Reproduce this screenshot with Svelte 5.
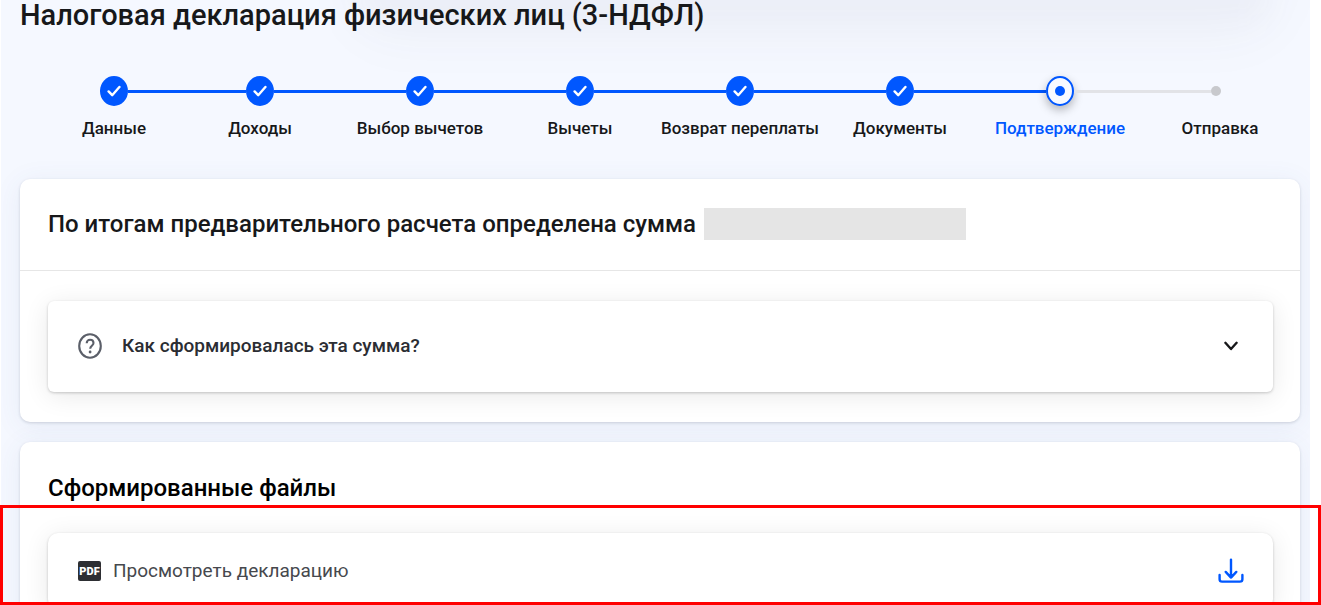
<script>
  const steps = [
    { label: 'Данные', state: 'done' },
    { label: 'Доходы', state: 'done' },
    { label: 'Выбор вычетов', state: 'done' },
    { label: 'Вычеты', state: 'done' },
    { label: 'Возврат переплаты', state: 'done' },
    { label: 'Документы', state: 'done' },
    { label: 'Подтверждение', state: 'current' },
    { label: 'Отправка', state: 'next' },
  ];
  let open = $state(false);
</script>

<main class="page">
  <div class="shade"></div>
  <h1>Налоговая декларация физических лиц (3-НДФЛ)</h1>

  <ol class="steps">
    {#each steps as step}
      <li class="step {step.state}" aria-current={step.state === 'current' ? 'step' : undefined}>
        <div class="track">
          <span class="line"></span>
          <span class="marker">
            {#if step.state === 'done'}
              <svg width="14" height="14" viewBox="0 0 14 14" aria-hidden="true">
                <path d="M1.6 7.4 5.2 11.2 12.4 3" />
              </svg>
            {/if}
          </span>
          <span class="line"></span>
        </div>
        <span class="label">{step.label}</span>
      </li>
    {/each}
  </ol>

  <section class="card">
    <header class="summary">
      <h2>По итогам предварительного расчета определена сумма</h2>
      <span class="amount"></span>
    </header>
    <div class="body">
      <button class="question" type="button" aria-expanded={open} onclick={() => (open = !open)}>
        <svg class="help" width="24" height="26" viewBox="0 0 24 26" aria-hidden="true">
          <ellipse cx="12" cy="13" rx="10.8" ry="11.7" />
          <path d="M8.7 10.2C8.7 8 10.1 6.7 12.1 6.7s3.4 1.3 3.4 3.3c0 2.7-3.3 3-3.3 5.8" />
          <circle class="dot" cx="12.1" cy="19" r="1.4" />
        </svg>
        <span class="question-text">Как сформировалась эта сумма?</span>
        <svg class="chevron" width="14" height="10" viewBox="0 0 14 10" aria-hidden="true">
          <path d="M1.4 1.8 7 8l5.6-6.2" />
        </svg>
      </button>
    </div>
  </section>

  <section class="card files">
    <h2>Сформированные файлы</h2>
    <div class="file">
      <svg width="24" height="20" viewBox="0 0 24 20" aria-hidden="true">
        <rect width="23" height="20" rx="2" fill="#2d2f33" />
        <text x="11.5" y="14" text-anchor="middle">PDF</text>
      </svg>
      <a class="file-name" href="#view">Просмотреть декларацию</a>
      <button class="download" type="button" aria-label="Скачать">
        <svg width="26" height="26" viewBox="0 0 26 26" aria-hidden="true">
          <path d="M13 1.6v18M7.7 13.9 13 19.6l5.3-5.7M1.6 17v4.2Q1.6 23.6 4.1 23.6h17.8q2.5 0 2.5-2.4V17" />
        </svg>
      </button>
    </div>
  </section>
</main>
<div class="frame"></div>

<style>
  :global(body) {
    margin: 0;
    background: #fff;
    overflow: hidden;
  }
  .page {
    position: relative;
    box-sizing: border-box;
    height: 100vh;
    overflow: hidden;
    margin: 0 11px 0 1px;
    padding: 0 10px 0 19px;
    background: #f5f8ff;
    color: #17181a;
    font-family: Roboto, 'Liberation Sans', sans-serif;
  }
  .shade {
    position: absolute;
    top: -60px;
    left: 28%;
    right: 48px;
    height: 80px;
    box-shadow: 0 0 56px rgba(60, 60, 90, 0.08);
    background: rgba(60, 60, 90, 0.05);
    filter: blur(16px);
  }
  h1,
  h2 {
    margin: 0;
    font-weight: 500;
  }
  h1 {
    position: relative;
    font-size: 29px;
    line-height: 30px;
  }
  h2 {
    font-size: 24px;
    line-height: 32px;
  }
  .steps {
    display: grid;
    grid-template-columns: repeat(8, 1fr);
    margin: 46px 0 0;
    padding: 0;
    list-style: none;
  }
  .step {
    position: relative;
    min-width: 0;
  }
  .step:first-child {
    padding-left: 28px;
  }
  .track {
    display: flex;
    align-items: center;
    height: 30px;
  }
  .step:last-child .track {
    padding-right: 8px;
  }
  .line {
    flex: 1;
    height: 3px;
    background: #0057ff;
  }
  .current .line:last-child,
  .next .line {
    background: #e2e3e7;
  }
  .step:first-child .line:first-child,
  .step:last-child .line:last-child {
    background: none;
  }
  .marker {
    display: flex;
    align-items: center;
    justify-content: center;
    box-sizing: border-box;
    width: 28px;
    height: 30px;
    border-radius: 50%;
    background: #0057ff;
  }
  .marker path {
    fill: none;
    stroke: #fff;
    stroke-width: 2.4;
    stroke-linecap: round;
    stroke-linejoin: round;
  }
  .current .marker {
    border: 2px solid #0057ff;
    background: #f8faff;
    box-shadow: 0 4px 10px rgba(0, 0, 0, 0.28);
  }
  .current .marker::before {
    content: '';
    width: 10px;
    height: 10px;
    border-radius: 50%;
    background: #0057ff;
  }
  .next .marker {
    width: 10px;
    height: 10px;
    background: #c8c9cd;
  }
  .label {
    display: block;
    margin-top: 12px;
    font-size: 17px;
    font-weight: 500;
    line-height: 20px;
    text-align: center;
    white-space: nowrap;
  }
  .current .label {
    color: #0057ff;
  }
  .card {
    position: relative;
    margin-top: 41px;
    border-radius: 10px;
    background: #fff;
    box-shadow:
      0 1px 3px rgba(40, 50, 70, 0.18),
      0 4px 28px rgba(70, 90, 150, 0.08);
  }
  .summary {
    display: flex;
    align-items: center;
    gap: 8px;
    padding: 29px 28px 30px;
    border-bottom: 1px solid #e6e6e6;
  }
  .amount {
    flex: 0 1 262px;
    height: 32px;
    background: #e5e5e5;
  }
  .body {
    padding: 30px 27px 30px 28px;
  }
  .question,
  .file {
    display: flex;
    align-items: center;
    box-sizing: border-box;
    width: 100%;
    background: #fff;
    box-shadow:
      0 1px 3px rgba(0, 0, 0, 0.2),
      0 4px 26px rgba(0, 0, 0, 0.09);
  }
  .question {
    padding: 31px 35px 32px 30px;
    border: 0;
    border-radius: 6px;
    color: #2b2d33;
    font: 500 19px/28px Roboto, 'Liberation Sans', sans-serif;
    text-align: left;
  }
  .question-text {
    flex: 1;
    margin-left: 20px;
  }
  .help {
    fill: none;
    stroke: #5b5f69;
    stroke-width: 2.1;
  }
  .help .dot {
    fill: #5b5f69;
    stroke: none;
  }
  .chevron {
    fill: none;
    stroke: #17181a;
    stroke-width: 2.4;
    stroke-linecap: round;
    stroke-linejoin: round;
  }
  .files {
    margin-top: 20px;
    padding: 30px 27px 30px 28px;
    color: #000;
  }
  .file {
    margin-top: 29px;
    padding: 24px 29px 24px 30px;
    border-radius: 10px;
  }
  .file text {
    fill: #fff;
    font: 900 11px Roboto, 'Liberation Sans', sans-serif;
  }
  .file-name {
    flex: 1;
    margin-left: 11px;
    color: #46484d;
    font-size: 19px;
    line-height: 28px;
    text-decoration: none;
  }
  .download {
    display: flex;
    padding: 0;
    border: 0;
    background: none;
  }
  .download path {
    fill: none;
    stroke: #0057ff;
    stroke-width: 2.4;
    stroke-linecap: round;
    stroke-linejoin: round;
  }
  .frame {
    position: fixed;
    inset: auto 0 0;
    box-sizing: border-box;
    height: 100px;
    border: 3px solid #f00;
    pointer-events: none;
  }
</style>
